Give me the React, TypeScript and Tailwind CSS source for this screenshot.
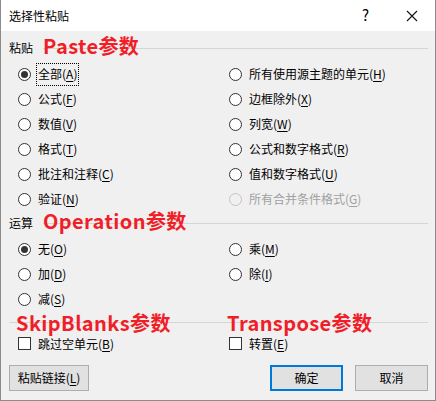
import React from "react";

const FONT = { fontFamily: '"Noto Sans CJK SC", "Noto Sans", sans-serif' };

function Key({ label, k }: { label: string; k: string }) {
  return (
    <>
      {label}(<span className="underline underline-offset-2">{k}</span>)
    </>
  );
}

function Radio({ checked, disabled, label, k, focus }: { checked?: boolean; disabled?: boolean; label: string; k: string; focus?: boolean }) {
  return (
    <div className="flex items-center h-[25px]">
      <span
        className={`w-[13px] h-[13px] rounded-full border flex items-center justify-center ${disabled ? "border-[#c4c4c4] bg-[#f0f0f0]" : "border-[#333] bg-white"}`}
      >
        {checked && <span className="w-[7px] h-[7px] rounded-full bg-[#333]" />}
      </span>
      <span
        className={`ml-[6px] px-[1px] h-[21px] leading-[20px] text-[12px] ${disabled ? "text-[#a0a0a0]" : "text-black"} ${focus ? "outline outline-1 outline-dotted outline-black" : ""}`}
      >
        <Key label={label} k={k} />
      </span>
    </div>
  );
}

function Check({ label, k }: { label: string; k: string }) {
  return (
    <div className="flex items-center h-[25px]">
      <span className="w-[13px] h-[13px] border border-[#333] bg-white" />
      <span className="ml-[7px] text-[12px] leading-[16px] text-black mt-[1px]">
        <Key label={label} k={k} />
      </span>
    </div>
  );
}

const RED = "absolute text-[20px] leading-[20px] font-bold text-[#f01e28] whitespace-nowrap tracking-[0.4px]";

function Header({ label, red }: { label: string; red: string }) {
  return (
    <div className="flex items-center h-[20px]">
      <span className="text-[12px] text-black pr-[10px]">{label}</span>
      <div className="relative flex-1 h-[20px] flex items-center">
        <div className="w-full h-px bg-[#d5d5d5]" />
        <span className={`${RED} left-0 top-[-2px]`}>{red}</span>
      </div>
    </div>
  );
}

function Btn({ children, primary, w }: { children: React.ReactNode; primary?: boolean; w: string }) {
  return (
    <button
      className={`h-[26px] ${w} bg-[#e1e1e1] text-[12px] text-black flex items-center justify-center ${primary ? "border-2 border-[#0078d7]" : "border border-[#adadad]"}`}
    >
      {children}
    </button>
  );
}

export default function App() {
  return (
    <div className="w-[436px] h-[401px] flex flex-col border-x border-b border-[#8c8c8c] bg-[#f0f0f0] overflow-hidden" style={FONT}>
      <div className="h-[31px] bg-white flex items-center shrink-0">
        <span className="ml-[8px] text-[12px] text-black">选择性粘贴</span>
        <span className="ml-auto mr-[37px] text-[15px] text-black">?</span>
        <svg width="12" height="12" viewBox="0 0 12 12" className="mr-[17px]">
          <path d="M1 1L11 11M11 1L1 11" stroke="#111" strokeWidth="1.1" />
        </svg>
      </div>

      <div className="flex flex-col pl-[8px] pr-[7px] pt-[7px]">
        <Header label="粘贴" red="Paste参数" />
        <div className="grid grid-cols-[211px_1fr] pl-[9px] mt-[4px]">
          <div>
            <Radio checked focus label="全部" k="A" />
            <Radio label="公式" k="F" />
            <Radio label="数值" k="V" />
            <Radio label="格式" k="T" />
            <Radio label="批注和注释" k="C" />
            <Radio label="验证" k="N" />
          </div>
          <div>
            <Radio label="所有使用源主题的单元" k="H" />
            <Radio label="边框除外" k="X" />
            <Radio label="列宽" k="W" />
            <Radio label="公式和数字格式" k="R" />
            <Radio label="值和数字格式" k="U" />
            <Radio disabled label="所有合并条件格式" k="G" />
          </div>
        </div>

        <div className="mt-[1px]">
          <Header label="运算" red="Operation参数" />
        </div>
        <div className="grid grid-cols-[211px_1fr] pl-[9px] mt-[4px]">
          <div>
            <Radio checked label="无" k="O" />
            <Radio label="加" k="D" />
            <Radio label="减" k="S" />
          </div>
          <div>
            <Radio label="乘" k="M" />
            <Radio label="除" k="I" />
          </div>
        </div>

        <div className="relative h-[18px] flex items-start mt-[1px]">
          <div className="w-full h-px bg-[#d5d5d5] mt-[9px]" />
          <span className={`${RED} left-[7px] top-[0px]`}>SkipBlanks参数</span>
          <span className={`${RED} left-[218px] top-[0px]`}>Transpose参数</span>
        </div>
        <div className="grid grid-cols-[211px_1fr] pl-[9px]">
          <Check label="跳过空单元" k="B" />
          <Check label="转置" k="E" />
        </div>

        <div className="flex items-center mt-[9px]">
          <Btn w="w-[80px]">
            <Key label="粘贴链接" k="L" />
          </Btn>
          <div className="ml-auto flex gap-[12px]">
            <Btn primary w="w-[73px]">确定</Btn>
            <Btn w="w-[73px]">取消</Btn>
          </div>
        </div>
      </div>
    </div>
  );
}
